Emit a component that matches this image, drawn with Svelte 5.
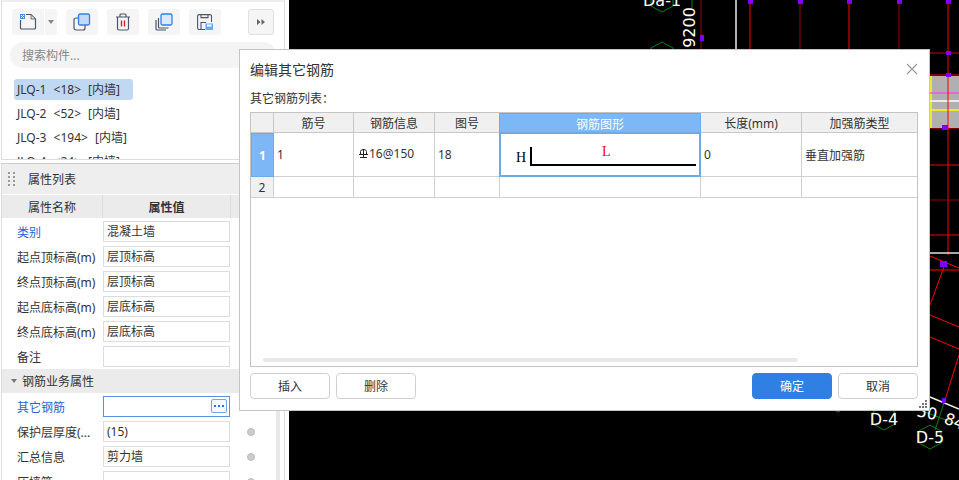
<script lang="ts">
	const parts = [
		{ name: 'JLQ-1', count: 18, selected: true },
		{ name: 'JLQ-2', count: 52 },
		{ name: 'JLQ-3', count: 194 },
		{ name: 'JLQ-4', count: 24 }
	];

	const baseProps = [
		{ label: '类别', value: '混凝土墙', link: true },
		{ label: '起点顶标高(m)', value: '层顶标高' },
		{ label: '终点顶标高(m)', value: '层顶标高' },
		{ label: '起点底标高(m)', value: '层底标高' },
		{ label: '终点底标高(m)', value: '层底标高' },
		{ label: '备注', value: '' }
	];

	const rebarProps = [
		{ label: '保护层厚度(...', value: '(15)' },
		{ label: '汇总信息', value: '剪力墙' },
		{ label: '压墙筋', value: '' }
	];

	const columns = ['筋号', '钢筋信息', '图号', '钢筋图形', '长度(mm)', '加强筋类型'];
	const redLines = [
		[701, 0, 701, 49, '#a00000'],
		[750, 0, 750, 49, '#f00'],
		[800, 0, 800, 49, '#900'],
		[849, 0, 849, 49, '#f00'],
		[899, 0, 899, 49, '#900'],
		[948, 0, 948, 255, '#f00'],
		[930, 53, 959, 53, '#c00'],
		[930, 75, 959, 75, '#f00'],
		[930, 128, 959, 128, '#f00'],
		[930, 165, 959, 165, '#e00'],
		[930, 200, 959, 200, '#900'],
		[930, 235, 959, 235, '#e00'],
		[930, 270, 959, 270, '#f00'],
		[930, 256, 959, 268, '#f00'],
		[945, 264, 930, 305, '#f00'],
		[930, 315, 959, 327, '#f00'],
		[930, 337, 959, 349, '#f00'],
		[959, 355, 945, 400, '#f00']
	];
	const squares = [
		[748, 0, 5, 4], [798, 0, 5, 4], [847, 0, 5, 4], [897, 0, 5, 4], [946, 0, 5, 4],
		[700, 35, 4, 6], [946, 51, 5, 4], [946, 73, 5, 4], [942, 125, 6, 5], [940, 261, 7, 6], [942, 398, 4, 5]
	];
	const hexes = [
		[662, 0], [662, 54], [838, 400], [884, 418], [930, 437]
	];
</script>

<div class="screen">
	<aside class="panel">
		<section class="parts">
			<div class="toolbar">
				<div class="split">
					<button class="tool first" aria-label="新建">
						<svg width="18" height="18" viewBox="0 0 18 18" fill="none">
							<path d="M1.500 7v8a1 1 0 0 0 1 1h13a1 1 0 0 0 1-1V6l-4.500-4.500H7" stroke="#4b556b" stroke-width="1.200" />
							<path d="M12 2v4h4" fill="#dfe3ea" stroke="#4b556b" stroke-width="0.800" />
							<rect x="1" y="1" width="5" height="5" fill="#4a8ee8" />
							<path d="M2 2h1v1H2zM4 2h1v1H4zM3 3h1v1H3zM2 4h1v1H2zM4 4h1v1H4z" fill="#fff" />
						</svg>
					</button>
					<button class="tool caret" aria-label="更多"><span class="down"></span></button>
				</div>
				<button class="tool" aria-label="复制">
					<svg width="18" height="18" viewBox="0 0 18 18" fill="none">
						<rect x="1" y="5" width="11" height="12" rx="2" stroke="#4b556b" stroke-width="1.200" />
						<rect x="5.500" y="1" width="11" height="11" rx="1.500" fill="#c3d9f7" stroke="#2f80ed" stroke-width="1.300" />
					</svg>
				</button>
				<button class="tool" aria-label="删除">
					<svg width="16" height="18" viewBox="0 0 16 18" fill="none" stroke="#4b556b" stroke-width="1.200">
						<path d="M1 4h14M5 4V2a1 1 0 0 1 1-1h4a1 1 0 0 1 1 1v2M2.500 4v11.500a1.500 1.500 0 0 0 1.500 1.500h8a1.500 1.500 0 0 0 1.500-1.500V4" />
						<path d="M6.500 7.500v6M9.500 7.500v6" stroke="#e02020" stroke-width="1.400" />
					</svg>
				</button>
				<button class="tool" aria-label="层间复制">
					<svg width="18" height="18" viewBox="0 0 18 18" fill="none">
						<path d="M1 7v9a1 1 0 0 0 1 1h9" stroke="#4b556b" stroke-width="1.200" />
						<path d="M3.500 5v9a1 1 0 0 0 1 1h9" stroke="#4b556b" stroke-width="1.200" />
						<rect x="6" y="1" width="11" height="11" rx="1.500" fill="#dbe8fb" stroke="#2f80ed" stroke-width="1.300" />
					</svg>
				</button>
				<button class="tool" aria-label="存盘">
					<svg width="16" height="16" viewBox="0 0 16 16" fill="none" stroke="#4b556b" stroke-width="1.100">
						<path d="M8 15.500H2A1.500 1.500 0 0 1 .6 14V2A1.500 1.500 0 0 1 2 .6h11A1.500 1.500 0 0 1 14.500 2v6" />
						<path d="M4 15V8.500h5M4 .6v3h7V.6" />
						<rect x="8.500" y="9.500" width="7.500" height="6.500" fill="#6ea6ee" stroke="none" />
						<rect x="10" y="10.500" width="4.500" height="2" fill="#fff" stroke="none" />
					</svg>
				</button>
				<button class="expand" aria-label="展开">
					<svg width="8" height="6" viewBox="0 0 8 6" fill="#666"><path d="M0 0l3.500 3L0 6zM4.500 0L8 3 4.500 6z" /></svg>
				</button>
			</div>
			<div class="search">搜索构件...</div>
			<ul class="part-list">
				{#each parts as part}
					<li class:selected={part.selected}>{part.name} &lt;{part.count}&gt; [内墙]</li>
				{/each}
			</ul>
		</section>

		<section class="props">
			<header class="props-title">
				<svg width="7" height="14" viewBox="0 0 7 14" fill="#999">
					<rect x="0" y="0" width="2" height="2" /><rect x="5" y="0" width="2" height="2" />
					<rect x="0" y="4" width="2" height="2" /><rect x="5" y="4" width="2" height="2" />
					<rect x="0" y="8" width="2" height="2" /><rect x="5" y="8" width="2" height="2" />
					<rect x="0" y="12" width="2" height="2" /><rect x="5" y="12" width="2" height="2" />
				</svg>
				<span>属性列表</span>
			</header>
			<div class="props-head">
				<div class="head-name">属性名称</div>
				<div class="head-value">属性值</div>
			</div>
			<div class="props-body">
				<div class="props-rows">
					<div class="group">
						{#each baseProps as row}
							<div class="row">
								<span class="name" class:link={row.link}>{row.label}</span>
								<span class="value">{row.value}</span>
							</div>
						{/each}
					</div>
					<div class="section-title"><span class="down small"></span>钢筋业务属性</div>
					<div class="group">
						<div class="row">
							<span class="name link">其它钢筋</span>
							<span class="value active">
								<span class="more">
									<svg width="10" height="2" viewBox="0 0 10 2" fill="#2f6fd8"><rect width="2" height="2" /><rect x="4" width="2" height="2" /><rect x="8" width="2" height="2" /></svg>
								</span>
							</span>
						</div>
						{#each rebarProps as row}
							<div class="row">
								<span class="name">{row.label}</span>
								<span class="value">{row.value}</span>
								<span class="dot"></span>
							</div>
						{/each}
					</div>
				</div>
				<div class="track"></div>
			</div>
		</section>
	</aside>

	<main class="canvas">
		<svg class="cad" width="670" height="480" viewBox="289 0 670 480" fill="none">
			<path d="M736 0v49" stroke="#e8e8e8" stroke-width="1.500" />
			{#each redLines as [x1, y1, x2, y2, color]}
				<line {x1} {y1} {x2} {y2} stroke={color} />
			{/each}
			<rect x="930" y="76" width="29" height="52" fill="#b0b0b0" />
			<path d="M931 76v52" stroke="#ff0" stroke-width="1.500" />
			<path d="M930 93h29" stroke="#ff50e0" stroke-width="1.500" />
			<path d="M930 101h29" stroke="#fff" stroke-width="1.500" />
			<path d="M930 110h29" stroke="#ff0" stroke-width="1.500" />
			<path d="M948 76v52" stroke="#f00" />
			<path d="M930 253h29" stroke="#e0e0e0" stroke-width="1.500" />
			<path d="M930 397l29 12" stroke="#f0f0f0" stroke-width="1.500" />
			<path d="M944 403l-9 27M920 410l39 15M692 0v8" stroke="#0a800a" />
			{#each hexes as [cx, cy]}
				<path d="M{cx - 11} {cy - 6}l11-6 11 6v12l-11 6-11-6z" stroke="#0a800a" />
			{/each}
			{#each squares as [x, y, width, height]}
				<rect {x} {y} {width} {height} fill="#8000ff" />
			{/each}
			<text class="cad-text" x="643" y="6">Da-1</text>
			<text class="cad-text" x="884" y="425" text-anchor="middle">D-4</text>
			<text class="cad-text" x="930" y="443" text-anchor="middle">D-5</text>
			<text class="cad-text" transform="translate(695 58) rotate(-90)">09200</text>
			<text class="cad-text" transform="translate(916 416) rotate(12)">50</text>
			<text class="cad-text" transform="translate(943 423) rotate(20)">84</text>
		</svg>
	</main>

	<div class="dialog">
		<header class="dialog-head">
			<h2>编辑其它钢筋</h2>
			<button class="close" aria-label="关闭">
				<svg width="12" height="12" viewBox="0 0 12 12" stroke="#999" stroke-width="1.100"><path d="M1 1l10 10M11 1L1 11" /></svg>
			</button>
		</header>
		<div class="dialog-label">其它钢筋列表：</div>
		<div class="sheet">
			<div class="cell corner"></div>
			{#each columns as col, i}
				<div class="cell th" class:picked={i === 3} class:end={i === 5}>{col}</div>
			{/each}

			<div class="cell rowno on">1</div>
			<div class="cell td">1</div>
			<div class="cell td info">
				<svg width="9" height="10" viewBox="0 0 9 10" fill="none" stroke="#222"><path d="M1.500 5V2.500a3 2 0 0 1 6 0V5M0 5.500h9M4.500 0v8M1 8.500h7" /></svg>16@150
			</div>
			<div class="cell td">18</div>
			<div class="cell td shape">
				<span class="h">H</span>
				<span class="l">L</span>
				<span class="bar"></span>
			</div>
			<div class="cell td">0</div>
			<div class="cell td end">垂直加强筋</div>

			<div class="cell rowno two">2</div>
			<div class="cell td two"></div>
			<div class="cell td two"></div>
			<div class="cell td two"></div>
			<div class="cell td two"></div>
			<div class="cell td two"></div>
			<div class="cell td two end"></div>

			<div class="sheet-scroll"></div>
		</div>
		<footer class="dialog-foot">
			<button class="btn">插入</button>
			<button class="btn">删除</button>
			<span class="spacer"></span>
			<button class="btn primary">确定</button>
			<button class="btn">取消</button>
		</footer>
		<svg class="grip" width="9" height="9" viewBox="0 0 9 9" fill="#777">
			<rect x="6" y="0" width="2" height="2" />
			<rect x="3" y="3" width="2" height="2" /><rect x="6" y="3" width="2" height="2" />
			<rect x="0" y="6" width="2" height="2" /><rect x="3" y="6" width="2" height="2" /><rect x="6" y="6" width="2" height="2" />
		</svg>
	</div>
</div>

<style>
	:global(body) {
		margin: 0;
		background: #000;
	}

	.screen {
		position: relative;
		display: flex;
		width: 959px;
		height: 480px;
		overflow: hidden;
		font-family: "Noto Sans", "Noto Sans CJK SC", sans-serif;
		font-size: 12px;
		color: #333;
	}

	button {
		font: inherit;
		color: inherit;
		padding: 0;
		cursor: pointer;
	}

	.panel {
		flex: 0 0 289px;
		box-sizing: border-box;
		height: 480px;
		padding-left: 1px;
		padding-right: 4px;
		background: #fff;
		display: flex;
		flex-direction: column;
	}

	.parts {
		box-sizing: border-box;
		height: 160px;
		border: 1px solid #ddd;
		border-top: 2px solid #eee;
		overflow: hidden;
		flex-shrink: 0;
	}

	.toolbar {
		display: flex;
		align-items: center;
		gap: 9px;
		padding: 7px 0 0 10px;
	}

	.split {
		display: flex;
		gap: 1px;
	}

	.tool {
		width: 32px;
		height: 26px;
		border: none;
		border-radius: 3px;
		background: #f5f5f5;
		display: flex;
		align-items: center;
		justify-content: center;
	}

	.tool.first {
		border-radius: 3px 0 0 3px;
	}

	.tool.caret {
		width: 12px;
		border-radius: 0 3px 3px 0;
	}

	.down {
		display: block;
		width: 0;
		height: 0;
		border-left: 3px solid transparent;
		border-right: 3px solid transparent;
		border-top: 4px solid #888;
	}

	.expand {
		width: 26px;
		height: 26px;
		margin-left: 18px;
		box-sizing: border-box;
		border: 1px solid #e0e0e0;
		border-radius: 3px;
		background: #f5f5f5;
		display: flex;
		align-items: center;
		justify-content: center;
	}

	.search {
		height: 26px;
		line-height: 28px;
		margin: 7px 8px 0 8px;
		padding-left: 12px;
		border-radius: 13px;
		background: #f4f4f4;
		color: #888;
	}

	.part-list {
		list-style: none;
		margin: 11px 0 0 12px;
		padding: 0;
	}

	.part-list li {
		box-sizing: border-box;
		width: fit-content;
		min-width: 119px;
		height: 21px;
		line-height: 21px;
		padding-left: 3px;
		margin-bottom: 3px;
		border-radius: 3px;
		white-space: pre;
		word-spacing: 4px;
	}

	.part-list li.selected {
		background: #c0d8f2;
	}

	.props {
		margin-top: 3px;
		flex: 1;
		min-height: 0;
		border-top: 1px solid #ccc;
		border-left: 1px solid #ddd;
		border-right: 1px solid #ddd;
		overflow: hidden;
	}

	.props-title {
		box-sizing: border-box;
		height: 30px;
		background: #eeeeef;
		display: flex;
		align-items: center;
		gap: 13px;
		padding-left: 6px;
	}

	.props-head {
		margin-top: 1px;
		height: 23px;
		display: flex;
		line-height: 25px;
		background: #ebebeb;
		text-align: center;
	}

	.head-name {
		width: 100px;
		border-right: 1px solid #ddd;
	}

	.head-value {
		width: 127px;
		border-right: 1px solid #ddd;
		font-weight: 700;
	}

	.props-body {
		display: flex;
		align-items: stretch;
	}

	.props-rows {
		width: 274px;
		padding-top: 3px;
	}

	.track {
		width: 4px;
		background: #e8e8e8;
	}

	.group {
		display: flex;
		flex-direction: column;
		gap: 4px;
	}

	.row {
		display: flex;
		align-items: center;
		height: 21px;
		padding-left: 15px;
		white-space: nowrap;
	}

	.name {
		width: 86px;
		flex-shrink: 0;
		overflow: hidden;
	}

	.name.link {
		color: #2a62d8;
	}

	.value {
		box-sizing: border-box;
		width: 127px;
		height: 21px;
		line-height: 19px;
		padding-left: 3px;
		border: 1px solid #ddd;
		position: relative;
	}

	.value.active {
		border-color: #5b8fe0;
	}

	.more {
		position: absolute;
		right: 2px;
		top: 2px;
		box-sizing: border-box;
		width: 16px;
		height: 14px;
		border: 1px solid #6ea6ee;
		border-radius: 2px;
		background: #f6f9fe;
		display: flex;
		align-items: center;
		justify-content: center;
	}

	.dot {
		box-sizing: border-box;
		width: 8px;
		height: 8px;
		margin-left: 17px;
		border-radius: 50%;
		background: #ccc;
		border: 1px solid #bbb;
	}

	.section-title {
		height: 24px;
		margin: 2px 0 3px;
		background: #ebebeb;
		display: flex;
		align-items: center;
		gap: 5px;
		padding-left: 9px;
	}

	.down.small {
		border-top-color: #777;
	}

	.canvas {
		flex: 1;
		background: #000;
		min-width: 0;
	}

	.cad {
		display: block;
	}

	.cad-text {
		fill: #fff;
		font-family: "DejaVu Sans", sans-serif;
		font-size: 16px;
	}

	.dialog {
		position: absolute;
		left: 239px;
		top: 49px;
		box-sizing: border-box;
		width: 691px;
		height: 362px;
		padding: 0 11px 0 10px;
		background: #fff;
		border: 1px solid #c4c4c4;
	}

	.dialog-head {
		height: 37px;
		display: flex;
		align-items: center;
		justify-content: space-between;
	}

	.dialog-head h2 {
		margin: 0;
		font-size: 14px;
		font-weight: 400;
		color: #333;
	}

	.close {
		border: none;
		background: none;
		margin-right: 0;
		width: 12px;
		height: 12px;
		display: flex;
	}

	.dialog-label {
		height: 20px;
		line-height: 20px;
		margin: 2px 0 3px;
	}

	.sheet {
		position: relative;
		box-sizing: border-box;
		width: 668px;
		height: 255px;
		border: 1px solid #c4c4c4;
		display: grid;
		grid-template-columns: 23px 80px 81px 65px 201px 101px 115px;
		grid-template-rows: 20px 44px 21px;
		align-content: start;
	}

	.cell {
		box-sizing: border-box;
		border-right: 1px solid #d0d0d0;
		border-bottom: 1px solid #d0d0d0;
		display: flex;
		align-items: center;
	}

	.cell.end {
		border-right: none;
	}

	.corner,
	.th {
		background: #f0f0f0;
		border-color: #c8c8c8;
	}

	.th {
		justify-content: center;
		padding-top: 1px;
	}

	.th.picked {
		background: #7eb7f5;
		color: #fff;
		border: 1px solid #6ea9e8;
		border-bottom: none;
		margin-left: -1px;
		width: 202px;
	}

	.rowno {
		justify-content: center;
		background: #f0f0f0;
	}

	.rowno.on {
		background: #7eb7f5;
		border: 1px solid #6ea9e8;
		color: #fff;
		font-weight: 700;
	}

	.td {
		padding-left: 3px;
	}

	.td.info {
		gap: 1px;
		padding-left: 5px;
		padding-bottom: 2px;
	}

	.td.shape {
		position: relative;
		margin: -1px 0 0 -1px;
		width: 202px;
		height: 45px;
		border: 2px solid #6ea9e8;
	}

	.h,
	.l {
		position: absolute;
		font-family: "Liberation Serif", serif;
		line-height: 12px;
	}

	.h {
		left: 15px;
		top: 18px;
		font-size: 14px;
		color: #000;
	}

	.l {
		left: 101px;
		top: 12px;
		font-size: 14px;
		color: #f00;
	}

	.bar {
		position: absolute;
		left: 29px;
		top: 13px;
		width: 166px;
		height: 19px;
		box-sizing: border-box;
		border-left: 2px solid #000;
		border-bottom: 2px solid #000;
	}

	.sheet-scroll {
		position: absolute;
		left: 12px;
		top: 245px;
		width: 535px;
		height: 4px;
		border-radius: 2px;
		background: #e8e8e8;
	}

	.dialog-foot {
		display: flex;
		gap: 6px;
		margin-top: 6px;
	}

	.spacer {
		flex: 1;
	}

	.btn {
		box-sizing: border-box;
		width: 80px;
		height: 26px;
		border: 1px solid #d0d0d0;
		border-radius: 4px;
		background: #fff;
	}

	.btn.primary {
		background: #2f80e2;
		border-color: #2f80e2;
		color: #fff;
	}

	.grip {
		position: absolute;
		right: 1px;
		bottom: 1px;
	}
</style>
